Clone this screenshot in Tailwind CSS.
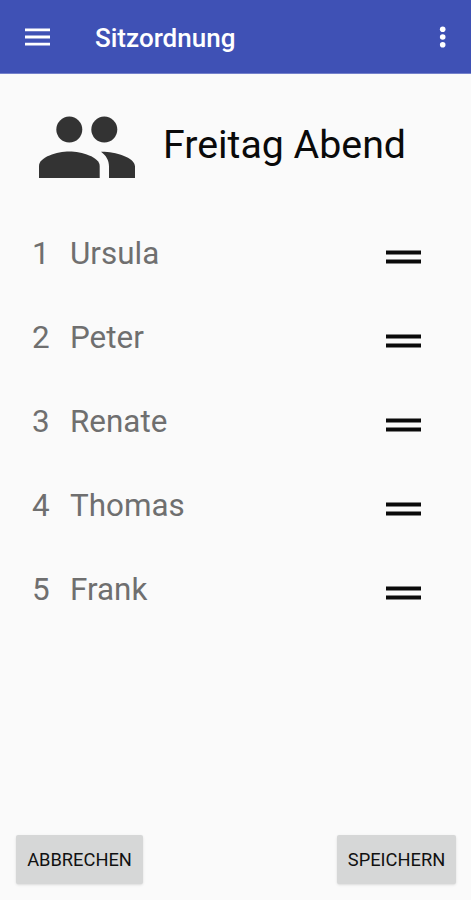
<!DOCTYPE html>
<html lang="de">
<head>
    <meta charset="UTF-8" />
    <meta name="viewport" content="width=device-width, initial-scale=1.0"/>
    <title>Sitzordnung</title>
    <script src="https://cdn.jsdelivr.net/npm/@tailwindcss/browser@4"></script>
</head>
<body class="bg-[#fafafa] font-[Roboto,sans-serif]">
<div class="flex h-[900px] w-[471px] flex-col overflow-hidden">

    <!-- App bar -->
    <header class="flex h-[74px] shrink-0 items-center border-b border-[#7481cb] bg-[#3f51b5] px-[25px] pt-px text-white">
        <svg class="h-[18px] w-[25px]" viewBox="0 0 25 18" fill="currentColor"><path d="M0 .5h25v2.800H0zM0 7.600h25v2.800H0zM0 14.700h25v2.800H0z"/></svg>
        <h1 class="ml-[45px] pt-px text-[26px] font-medium leading-8">Sitzordnung</h1>
        <svg class="ml-auto h-[22px] w-[7px]" viewBox="0 0 7 22" fill="currentColor"><circle cx="3.700" cy="3.200" r="2.800"/><circle cx="3.700" cy="11" r="2.800"/><circle cx="3.700" cy="18.800" r="2.800"/></svg>
    </header>

    <!-- Group title -->
    <section class="mt-[42px] flex h-[63px] items-center pl-[38px]">
        <svg class="h-[63px] w-[98px]" viewBox="0 0 98 63" fill="#333333">
            <circle cx="31.300" cy="13.600" r="13"/>
            <circle cx="66.300" cy="13.600" r="13"/>
            <path d="M1 62V50C1 41 19 35.500 31.300 35.500S61.700 41 61.700 50V62z"/>
            <path d="M71 62V50.500c0-6.300-3-11-8-14.700C76 35.500 97 41 97 50.500V62z"/>
        </svg>
        <h2 class="mb-1 ml-[27px] text-[39.300px] leading-none text-[#0a0a0a]">Freitag Abend</h2>
    </section>

    <!-- Seats -->
    <ol id="seats" class="mt-[33px] text-[31.400px] text-[#6f6f6f]"></ol>

    <!-- Actions -->
    <footer class="mb-[16px] mt-auto flex justify-between pl-4 pr-[15px] text-[18.300px] text-[#111]">
        <button class="h-[49px] w-[127px] rounded-xs bg-[#d6d7d7] shadow">ABBRECHEN</button>
        <button class="h-[49px] w-[119px] rounded-xs bg-[#d6d7d7] shadow">SPEICHERN</button>
    </footer>

</div>

<script>
    const names = ["Ursula", "Peter", "Renate", "Thomas", "Frank"];

    document.getElementById("seats").innerHTML = names.map((name, i) => `
        <li class="flex h-[84px] items-center pl-[32px] pr-[50px]">
            <span class="w-[38px]">${i + 1}</span>
            <span>${name}</span>
            <svg class="ml-auto mt-[6px] h-[14px] w-[35px]" viewBox="0 0 35 14" fill="#0a0a0a"><path d="M0 .6h35v4H0zM0 9.400h35v4H0z"/></svg>
        </li>
    `).join("");
</script>
</body>
</html>
